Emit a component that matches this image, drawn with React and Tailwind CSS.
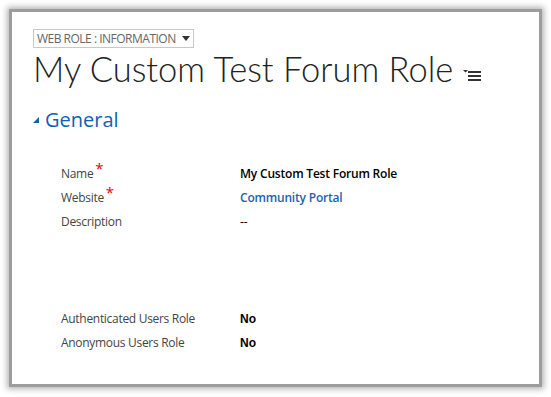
import React from 'react';

const fields = [
  { label: 'Name', required: true, value: 'My Custom Test Forum Role', kind: 'strong' },
  { label: 'Website', required: true, value: 'Community Portal', kind: 'link' },
  { label: 'Description', value: '--', kind: 'plain', tall: true },
  { label: 'Authenticated Users Role', value: 'No', kind: 'bool' },
  { label: 'Anonymous Users Role', value: 'No', kind: 'bool' },
];

const FieldValue = ({ kind, value }) => {
  if (kind === 'strong') return <span className="font-semibold text-black tracking-[-0.2px]">{value}</span>;
  if (kind === 'link') return <span className="font-semibold text-[#1f5fb3] tracking-[-0.2px]">{value}</span>;
  if (kind === 'bool') return <span className="font-bold text-black font-['Liberation_Sans',sans-serif]">{value}</span>;
  return <span className="text-black">{value}</span>;
};

const App = () => {
  return (
    <div className="w-[551px] h-[397px] bg-white p-[9px] font-['Open_Sans',sans-serif]">
      <div className="h-[378px] border-[3px] border-[#9d9d9d] bg-white shadow-[0_0_6px_2px_rgba(0,0,0,0.3)] pl-[21px] pt-[17px]">
        {/* form selector */}
        <button className="flex items-center gap-[6px] h-[19px] border border-[#c8c8c8] px-[3px] text-[12px] leading-none text-[#666] tracking-[-0.5px]">
          WEB ROLE : INFORMATION
          <svg width="8" height="5" viewBox="0 0 8 5"><path d="M0 0h8L4 5z" fill="#333" /></svg>
        </button>

        <div className="flex items-end gap-[10px]">
          <h1 className="text-[34.5px] leading-[42px] font-light text-[#222] font-['Lato',sans-serif]">My Custom Test Forum Role</h1>
          <svg width="18" height="14" viewBox="0 0 18 14" className="mb-[8px]">
            <path d="M0 2h5L2.5 4.5z" fill="#333" />
            <rect x="5" y="3" width="13" height="2" fill="#333" />
            <rect x="5" y="7" width="13" height="2" fill="#333" />
            <rect x="5" y="11" width="13" height="2" fill="#333" />
          </svg>
        </div>

        {/* section header */}
        <div className="flex items-center gap-[6px] mt-[17px]">
          <svg width="6" height="6" viewBox="0 0 6 6"><path d="M6 0v6H0z" fill="#1160b7" /></svg>
          <span className="text-[20px] leading-[26px] text-[#1160b7]">General</span>
        </div>

        <div className="mt-[29px] pl-[28px] flex flex-col">
          {fields.map((f) => (
            <div key={f.label} className={`flex text-[12px] ${f.tall ? 'h-[97px]' : 'h-[24px]'}`}>
              <div className="w-[179px] text-[#444] leading-[24px] tracking-[-0.3px]">
                {f.label}
                {f.required && <span className="text-[#e00] text-[15px] relative top-[-4px] ml-[2px] leading-none">*</span>}
              </div>
              <div className="leading-[24px]">
                <FieldValue kind={f.kind} value={f.value} />
              </div>
            </div>
          ))}
        </div>
      </div>
    </div>
  );
};

export default App;
